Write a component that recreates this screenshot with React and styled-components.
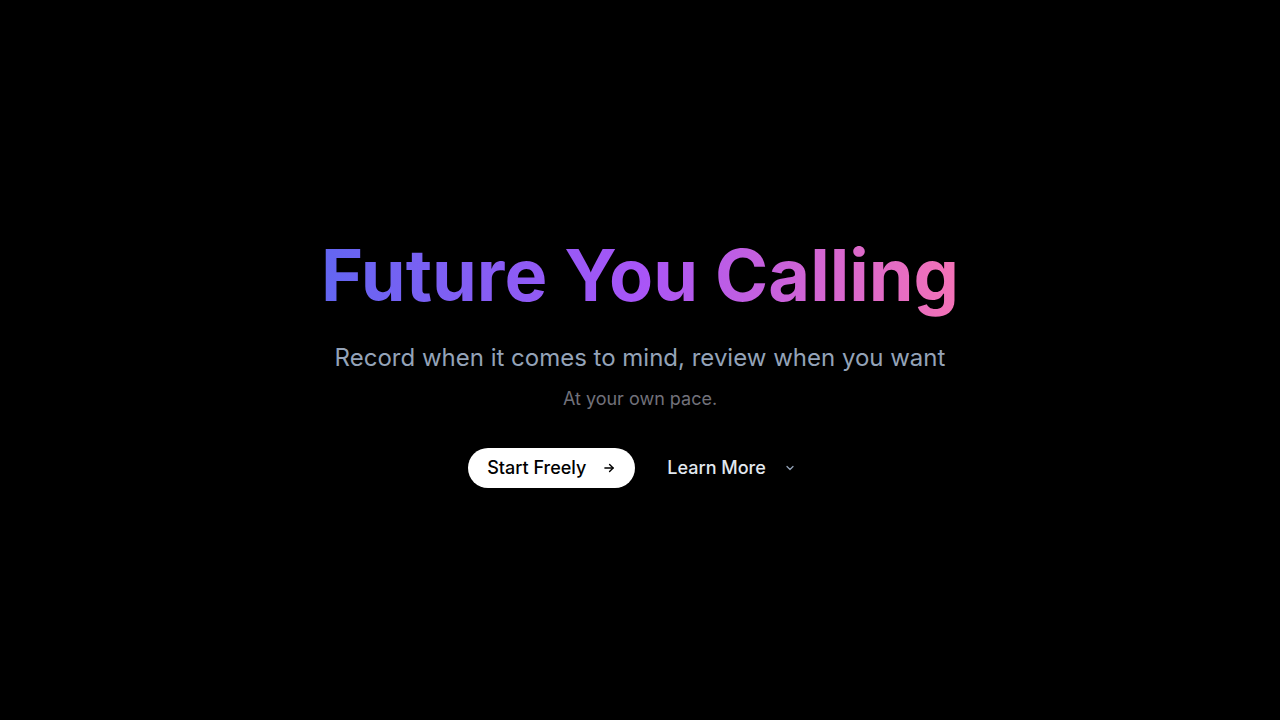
import React from 'react';
import styled, { createGlobalStyle } from 'styled-components';

const GlobalStyle = createGlobalStyle`
  html, body {
    margin: 0;
    padding: 0;
    background: #000;
  }
  body {
    font-family: Inter, "Noto Sans", sans-serif;
    -webkit-font-smoothing: antialiased;
  }
`;

const Page = styled.main`
  min-height: 100vh;
  box-sizing: border-box;
  padding-top: 3px;
  display: flex;
  flex-direction: column;
  align-items: center;
  justify-content: center;
  text-align: center;
  background: #000;
`;

const Title = styled.h1`
  margin: 0;
  font-size: 72px;
  font-weight: 700;
  line-height: 1.1;
  background: linear-gradient(to right, #6366f1, #a855f7, #f472b6);
  -webkit-background-clip: text;
  background-clip: text;
  color: transparent;
  padding-bottom: 4px;
`;

const Subtitle = styled.p`
  margin: 23px 0 0;
  font-size: 24px;
  line-height: 32px;
  color: #94a3b8;
`;

const Note = styled.p`
  margin: 11px 0 0;
  font-size: 18px;
  line-height: 28px;
  color: #71717a;
`;

const Actions = styled.div`
  display: flex;
  align-items: center;
  gap: 16px;
  margin-top: 35px;
`;

const Button = styled.button`
  display: inline-flex;
  align-items: center;
  gap: ${p => (p.$primary ? '16px' : '18px')};
  height: 40px;
  padding: ${p => (p.$primary ? '0 19px' : '0 16px')};
  border: none;
  border-radius: 999px;
  font-family: inherit;
  font-size: 18px;
  font-weight: 500;
  cursor: pointer;
  background: ${p => (p.$primary ? '#fff' : 'transparent')};
  color: ${p => (p.$primary ? '#000' : '#e2e8f0')};
`;

const Icon = styled.svg`
  width: ${p => p.$size || 14}px;
  height: ${p => p.$size || 14}px;
  color: ${p => p.$color || 'currentColor'};
`;

export default function App() {
  return (
    <>
      <GlobalStyle />
      <Page>
        <Title>Future You Calling</Title>
        <Subtitle>Record when it comes to mind, review when you want</Subtitle>
        <Note>At your own pace.</Note>
        <Actions>
          <Button $primary>
            Start Freely
            <Icon viewBox="0 0 24 24" fill="none" stroke="currentColor" strokeWidth="2.4" strokeLinecap="round" strokeLinejoin="round">
              <path d="M5 12h14" />
              <path d="M13 6l6 6-6 6" />
            </Icon>
          </Button>
          <Button>
            Learn More
            <Icon $size={12} $color="#94a3b8" viewBox="0 0 24 24" fill="none" stroke="currentColor" strokeWidth="2.5" strokeLinecap="round" strokeLinejoin="round">
              <path d="M6 9l6 6 6-6" />
            </Icon>
          </Button>
        </Actions>
      </Page>
    </>
  );
}
